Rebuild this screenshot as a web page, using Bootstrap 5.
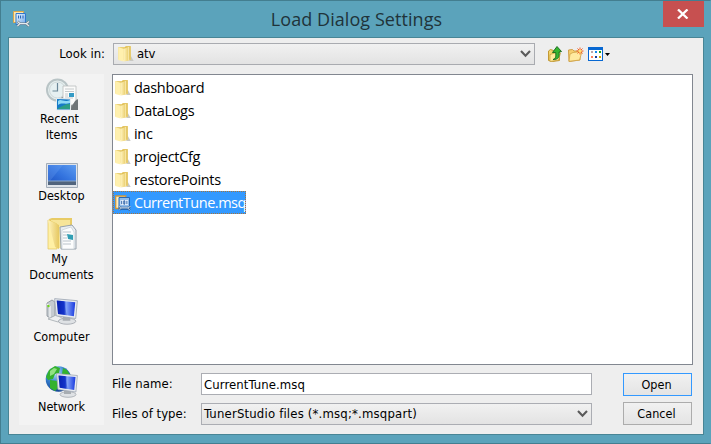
<!DOCTYPE html>
<html lang="en">
<head>
<meta charset="utf-8">
<meta name="viewport" content="width=device-width, initial-scale=1">
<title>Load Dialog Settings</title>
<link href="https://cdn.jsdelivr.net/npm/bootstrap@5.3.0/dist/css/bootstrap.min.css" rel="stylesheet">
<style>
body{width:711px;height:444px;overflow:hidden;font:13px/16px "DejaVu Sans Condensed","DejaVu Sans",sans-serif;font-stretch:condensed;letter-spacing:0;color:#000}
svg{display:block;flex:none}
.dlg{width:711px;height:444px;background:#5ba3bb;border:1px solid #437e90;border-right-color:#5ba3bb;padding:0 8px 0 7px}
.titlebar{height:36px}
.titlebar h1{font:400 18px/24px "Open Sans","Noto Sans",sans-serif;color:#20333a;letter-spacing:.06px;padding:6px 0 0 20px}
.titleicon{margin:10px 0 0 5px}
.btn-x{width:41px;height:26px;background:#c75050;border:0;border-radius:0;padding:0;margin-right:-2px}
.client{width:696px;height:398px;background:#eee;border:1px solid #488595;padding:5px 9px 9px 10px}
.lookrow{height:22px;margin-bottom:9px}
.lookrow label{width:86px}
.combo{height:22px;border:1px solid #a9abb0;background:linear-gradient(#f1f1f1,#e3e3e3);padding-right:3px}
.look{width:422px;margin-left:8px;letter-spacing:-.1px}
.look span{margin-left:3px}
.tools{margin-left:12px}
.places{width:85px;height:351px;background:#f3f3f3;margin-right:8px}
.place{width:85px;text-align:center;font-size:12.5px;line-height:16px;letter-spacing:.02px;white-space:nowrap}
.p-recent{height:82px;padding-top:4px}
.p-desk{height:60px;padding-top:7px}
.p-docs{height:78px;padding-top:2px}
.p-comp{height:70px;padding-top:2px}
.p-net{padding-top:1px}
.files{height:291px;width:581px;background:#fff;border:1px solid #828790;padding-top:1px}
.file{height:23px;font:14.5px/23px "Open Sans","Noto Sans",sans-serif;letter-spacing:-.33px;padding-left:2px;border:0;white-space:nowrap}
.file svg{margin-right:3px}
.sel{background:#3399ff;color:#fff;outline:1px dotted #a5743c;outline-offset:-1px;width:133px;letter-spacing:-.47px}
.fields{height:52px;margin-top:8px;padding-right:1px;letter-spacing:.08px}
.lbl{width:89px;letter-spacing:.03px}
.entry{width:391px;height:22px;border:1px solid #abadb3;border-radius:0;font:inherit;letter-spacing:inherit;padding:0 3px 0 2px;color:#000;background:#fff}
.kind{background:linear-gradient(#f1f1f1,#e3e3e3);letter-spacing:.18px}
.dbtn{width:69px;height:23px;border:1px solid #acacac;border-radius:0;background:linear-gradient(#f1f1f1,#e4e4e4);font:inherit;font-size:12.5px;letter-spacing:.05px;padding:0 2px 0 0;color:#000;transition:none}
.dbtn.go{border-color:#3399ff}
</style>
<script src="https://cdn.jsdelivr.net/npm/bootstrap@5.3.0/dist/js/bootstrap.bundle.min.js"></script>
</head>
<body>
<svg width="0" height="0" class="position-absolute">
<defs>
<linearGradient id="gf" x1="0" x2="1"><stop offset="0" stop-color="#fff3bd"/><stop offset="1" stop-color="#e6c861"/></linearGradient>
<linearGradient id="gb" x1="0" y1="1" x2="1" y2="0"><stop offset="0" stop-color="#1c50c0"/><stop offset=".5" stop-color="#3474df"/><stop offset="1" stop-color="#5d9cf0"/></linearGradient>
<linearGradient id="gs" x1="0" x2="1"><stop offset="0" stop-color="#0b22b4"/><stop offset=".4" stop-color="#1a3cd6"/><stop offset=".5" stop-color="#86a6f8"/><stop offset="1" stop-color="#1738de"/></linearGradient>
<radialGradient id="gg" cx=".38" cy=".25" r=".8"><stop offset="0" stop-color="#c5eaff"/><stop offset=".45" stop-color="#3a86d4"/><stop offset="1" stop-color="#0b3a8c"/></radialGradient>
<linearGradient id="gt" x1="0" y1="0" x2="1" y2="1"><stop offset="0" stop-color="#eef6ff"/><stop offset="1" stop-color="#6ea8e8"/></linearGradient>
<symbol id="folder" viewBox="0.8 0 14.5 16" preserveAspectRatio="none"><path d="M12 9l3 6h-4z" fill="#c9c9c4"/><path d="M1 1h6l1-1h4.500v14H2l-1-1z" fill="#e9cf76"/><path d="M7 1.500l1-1h4v13H7z" fill="#dfbe55"/><path d="M1 1l5 2v12.500L1 14z" fill="#fff0ae"/><path d="M6 3l5-2.500v14L6 15.500z" fill="url(#gf)"/><path d="M10.500 1v13.500" stroke="#fff6cb" stroke-width=".7"/></symbol>
<symbol id="tune" viewBox="0 0 17 17"><path d="M.5.500h10v11H.5z" fill="#fbe6b0" stroke="#dda748"/><path d="M3 2.500h9.500v11H3z" fill="url(#gt)" stroke="#2f78d0"/><path d="M5.500 4.500v3M7.500 4.500v3M10 4.500v3" fill="none" stroke="#2a66b8"/><path d="M4.500 10.500l2.500 2-2.500 2.500M7 12.700h6M16 10.500l-2.800 2.200 2.800 2.300" fill="none" stroke="#65747e" stroke-width="2.300"/><path d="M4.500 10.500l2.500 2-2.500 2.500M7 12.700h6M16 10.500l-2.800 2.200 2.800 2.300" fill="none" stroke="#e6ebee" stroke-width="1.200"/></symbol>
<symbol id="filetune" viewBox="0 0 16 16"><path d="M.7 1h10v12.500H.7z" fill="#fff0c2" stroke="#cc963f" stroke-width="1.300"/><path d="M4 2.500h10.500v12H4z" fill="#8fbcec" stroke="#2567b5"/><path d="M5.500 5h7.500v5H5.500z" fill="#eef6ff"/><path d="M6.700 5.800v3.400M11.900 5.800v3.400M8.800 5.800v3.400h1v-3.400z" stroke="#1f57a0" stroke-width=".9" fill="none"/><path d="M4 11.500l2.500 1.300-2 2M6.500 12.800h6M15.500 11.500l-3 1.300 2.500 2.500" fill="none" stroke="#2d5c92" stroke-width="1.900"/><path d="M4 11.500l2.500 1.300-2 2M6.500 12.800h6M15.500 11.500l-3 1.300 2.500 2.500" fill="none" stroke="#dce9f5" stroke-width=".9"/></symbol>
<symbol id="chev" viewBox="0 0 11 8"><path d="M1 1l4.500 4.700L10 1" fill="none" stroke="#5a5a5a" stroke-width="2.100"/></symbol>
<symbol id="monitor" viewBox="0 0 22 25"><ellipse cx="12" cy="21.500" rx="8" ry="2.800" fill="#dfe2e5" stroke="#999fa6" stroke-width=".7"/><path d="M8 16l7 1v4H8z" fill="#a8adb2"/><path d="M.6.600L21.400 2.500l-1.500 16.500L2 16.500z" fill="#e8ebef" stroke="#9fa8b5" stroke-width=".8"/><path d="M2.500 2.400L19.500 4l-1.300 13L3.700 14.800z" fill="url(#gs)"/><path d="M2.500 2.400l6.500.7 2.700 12.900-8-1.200z" fill="#0820b0" opacity=".3"/></symbol>
</defs>
</svg>
<div class="dlg">
 <header class="titlebar d-flex justify-content-between align-items-start">
  <svg class="titleicon" width="17" height="17"><use href="#tune"/></svg>
  <h1 class="mb-0">Load Dialog Settings</h1>
  <button class="btn btn-x d-flex align-items-center justify-content-center" aria-label="Close"><svg width="12" height="10" viewBox="0 0 12 10"><path d="M1 .5l9.500 9M10.500.500L1 9.500" stroke="#fff" stroke-width="2.300"/></svg></button>
 </header>
 <main class="client">
  <div class="lookrow d-flex align-items-center">
   <label class="text-end">Look in:</label>
   <div class="combo look d-flex align-items-center"><svg width="16" height="16" class="ms-1"><use href="#folder"/></svg><span class="flex-grow-1">atv</span><svg width="11" height="8"><use href="#chev"/></svg></div>
   <svg class="tools" width="66" height="18" viewBox="547 45 66 18">
    <path d="M548.500 51l2-1.500 3 1h6v10l-7 1-4-1z" fill="#f4d56c" stroke="#c39a34"/><path d="M550 54.500l8-2.500 2.500 1-2 7-8.500 1.500z" fill="#ffec9b" stroke="#c29a36" stroke-width=".7"/><path d="M553 59.500c3-1 3-3 2.700-7H552.500l4.500-6 4.500 5-2.500.6c.8 5-.8 7.600-6 7.400z" fill="#36b52f" stroke="#15681a" stroke-width=".9"/>
    <path d="M568.500 50l4-.5 1.500 1.500h6v9l-11 1.500z" fill="#f5cf70" stroke="#d0a04a"/><path d="M570 54l3-1.500 9-1-2.500 8.500-10.500 1.300z" fill="#ffeaa0" stroke="#d0a548" stroke-width=".8"/><path d="M580 47.500v7M576.500 51h7M577.500 48.500l5 5M582.500 48.500l-5 5" stroke="#f25b27"/><circle cx="580" cy="51" r="1.600" fill="#ffe173"/>
    <path d="M588 47h15v14h-15z" fill="#0868d2"/><path d="M589 50h13v10h-13z" fill="#fff"/><path d="M591 51h2v2h-2z" fill="#b7a7ae"/><path d="M595 51h2v2h-2z" fill="#1488ec"/><path d="M599 51h2v2h-2z" fill="#1ba119"/><path d="M591 56h2v2h-2z" fill="#ff805a"/><path d="M595 56h2v2h-2z" fill="#173e9b"/><path d="M599 56h2v2h-2z" fill="#d6a900"/>
    <path d="M605 53h5l-2.500 3z" fill="#000"/>
   </svg>
  </div>
  <div class="d-flex">
   <nav class="places d-flex flex-column">
    <div class="place p-recent"><svg class="mx-auto" width="32" height="33" viewBox="0 0 32 33"><circle cx="11.500" cy="12" r="10.500" fill="#e4eeee" stroke="#b9c4c6" stroke-width="2"/><circle cx="11.500" cy="12" r="8" fill="#e6f0f1" stroke="#cfd8d9"/><path d="M11.500 5v8h-5" stroke="#6b8798" stroke-width="1.200" fill="none"/><path d="M10 23l8-5h11l3 8v6H10z" fill="#85898a"/><path d="M17 8h13v15l-4 4h-9z" fill="#fbfbfa" stroke="#b9bcbc" stroke-width=".8"/><path d="M19 11h9M19 13.500h9M19 16h3M19 18h3M19 20h8" stroke="#c5cacc"/><path d="M23 15h5v4h-5z" fill="#359bc5"/><path d="M10.500 20.500l14 .5v11h-14z" fill="#167ac8" stroke="#e8eef0"/><path d="M12 23c3-3 6 2 12-1v3c-5 2-8-1-12 2z" fill="#8ed9f6"/><path d="M11 31c5-3 8-5 13-5v5z" fill="#2b9d86"/><path d="M25 31l4-8 3-2v11h-7z" fill="#707678"/></svg><div class="pe-1">Recent</div><div>Items</div></div>
    <div class="place p-desk"><svg class="mx-auto" width="32" height="25" viewBox="0 0 32 25"><path d="M.5.500h31v24H.5z" fill="#dfe4ea" stroke="#a2acb8"/><path d="M2 2h28v20H2z" fill="url(#gb)"/><path d="M2 2h15L4 18H2z" fill="#79adf8" opacity=".25"/><path d="M2 18h28v4H2z" fill="#51647d"/><path d="M2 18h28" stroke="#8ba8cc"/></svg><div>Desktop</div></div>
    <div class="place p-docs"><svg class="mx-auto" width="32" height="33" viewBox="0 0 32 33"><path d="M3 1l3-1h20v30H8z" fill="#e8cb65"/><path d="M5 2h19v28H9z" fill="#f7e599"/><path d="M14 9l12-2 4 5v19H15z" fill="#e9eef2" stroke="#97a2ac"/><path d="M16 12l9-3 3 5v17H16z" fill="#fcfdfd" stroke="#bdc6cd" stroke-width=".6"/><path d="M17 14h8M17 17h4M17 20h4M17 23h8M17 26h8" stroke="#bac3ca"/><path d="M21 16l6 1v5l-5-1z" fill="#319fb4"/><path d="M2 2l9 4v25H2z" fill="#fff0a5" stroke="#e3c45c" stroke-width=".7"/><path d="M2 2l11 5v24l-4-2z" fill="url(#gf)"/></svg><div class="pe-1">My</div><div>Documents</div></div>
    <div class="place p-comp"><svg class="mx-auto" width="32" height="33" viewBox="0 0 32 33"><path d="M1 7l5-3 3 2v14l-5 2-3-2z" fill="#c5cbd0" stroke="#858d94" stroke-width=".8"/><path d="M1 8l3 2v12" fill="none" stroke="#fff"/><circle cx="2.500" cy="10" r="1.200" fill="#6bd414"/><path d="M2 23l8-4 8 4-6 3z" fill="#edeff0" stroke="#a3a9ae" stroke-width=".8"/><svg x="8" y="2" width="24" height="27" viewBox="0 0 22 25" preserveAspectRatio="none"><use href="#monitor" width="22" height="25"/></svg></svg><div>Computer</div></div>
    <div class="place p-net"><svg class="mx-auto" width="34" height="34" viewBox="0 0 34 34"><circle cx="13.500" cy="14" r="12.800" fill="url(#gg)"/><path d="M4 5l6-4 5 2-1 5-4 1-2 5-5 1-2-3zM5 15l7 1 3 5-5 5-5-3zM18 3l4 2 4 6-5 1-4-3z" fill="#35b22e"/><path d="M5 6l4-3 3 1-3 5-4 2z" fill="#92e184"/><svg x="11" y="8" width="22" height="25"><use href="#monitor" width="22" height="25"/></svg></svg><div>Network</div></div>
   </nav>
   <section>
    <div class="files">
     <div class="file d-flex align-items-center"><svg width="16" height="16"><use href="#folder"/></svg>dashboard</div>
     <div class="file d-flex align-items-center"><svg width="16" height="16"><use href="#folder"/></svg>DataLogs</div>
     <div class="file d-flex align-items-center"><svg width="16" height="16"><use href="#folder"/></svg>inc</div>
     <div class="file d-flex align-items-center"><svg width="16" height="16"><use href="#folder"/></svg>projectCfg</div>
     <div class="file d-flex align-items-center"><svg width="16" height="16"><use href="#folder"/></svg>restorePoints</div>
     <div class="file sel d-flex align-items-center"><svg width="16" height="16"><use href="#filetune"/></svg>CurrentTune.msq</div>
    </div>
    <div class="fields d-flex justify-content-between">
     <div class="d-flex flex-column justify-content-between">
      <div class="d-flex align-items-center"><label class="lbl">File name:</label><input class="entry" value="CurrentTune.msq" aria-label="File name"></div>
      <div class="d-flex align-items-center"><label class="lbl">Files of type:</label><div class="combo entry kind d-flex align-items-center"><span class="flex-grow-1">TunerStudio files (*.msq;*.msqpart)</span><svg width="11" height="8"><use href="#chev"/></svg></div></div>
     </div>
     <div class="d-flex flex-column justify-content-between"><button class="btn dbtn go">Open</button><button class="btn dbtn">Cancel</button></div>
    </div>
   </section>
  </div>
 </main>
</div>
</body>
</html>
